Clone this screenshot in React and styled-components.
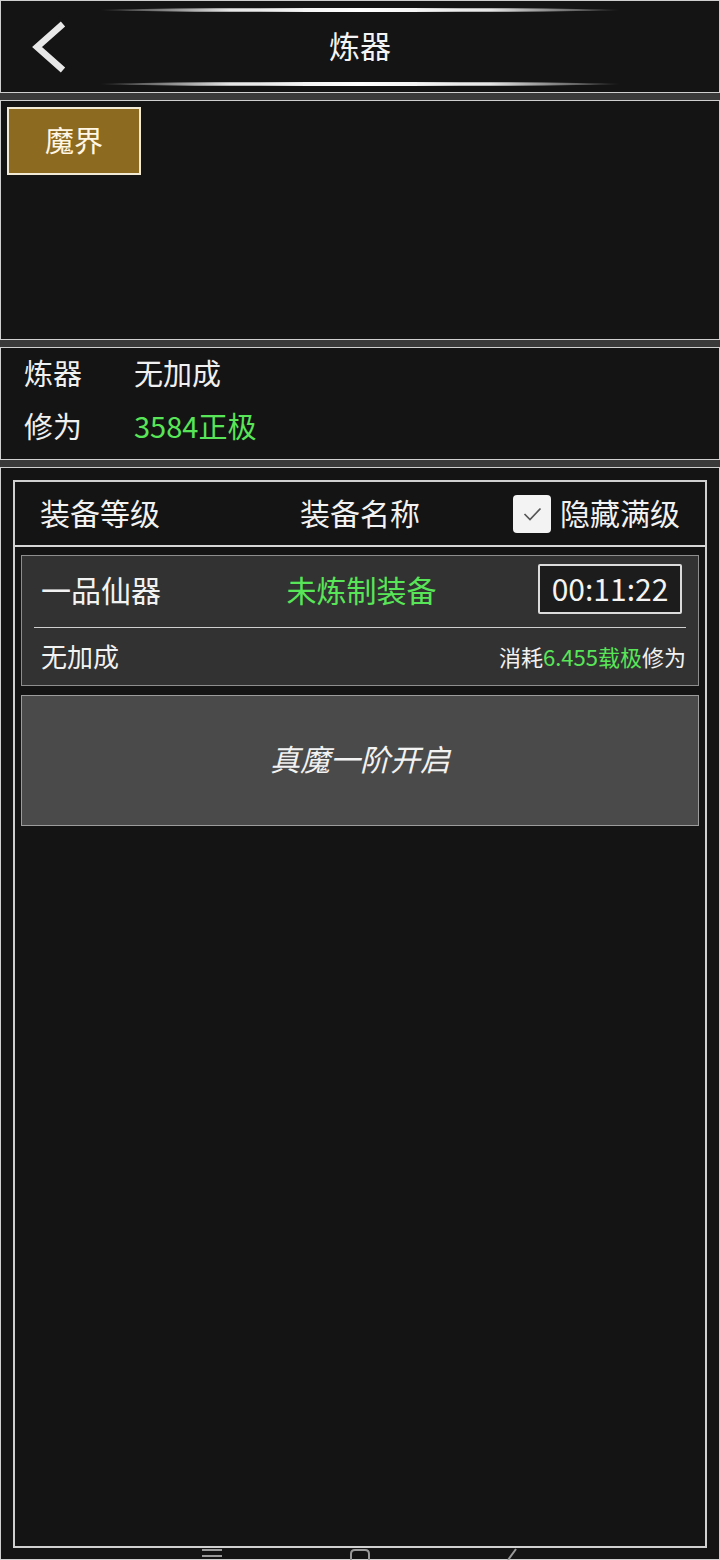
import React from "react";
import styled, { createGlobalStyle } from "styled-components";

const GlobalStyle = createGlobalStyle`
  * { box-sizing: border-box; }
  html, body {
    margin: 0;
    padding: 0;
    background: #3a3a3a;
  }
  body {
    font-family: "Noto Sans CJK SC", "Noto Sans", sans-serif;
    color: #f2f2f2;
  }
`;

const Page = styled.div`
  position: relative;
  width: 720px;
  height: 1560px;
  display: flex;
  flex-direction: column;
  gap: 7px;
  overflow: hidden;
`;

const Panel = styled.section`
  height: ${(props) => props.$height};
  background: #141414;
  border: 1px solid #cfcfcf;
  flex-shrink: 0;
`;

/* header */
const Header = styled(Panel)`
  display: grid;
  grid-template-columns: 99px 1fr 99px;
`;

const BackBtn = styled.div`
  display: flex;
  align-items: center;
  padding-left: 29px;
  cursor: pointer;
`;

const TitleCol = styled.div`
  display: flex;
  flex-direction: column;
  justify-content: space-between;
  align-items: stretch;
  padding: 7px 0 6px;
`;

const GlowLine = styled.div`
  height: 4px;
  border-radius: 50%;
  background: linear-gradient(
    90deg,
    rgba(255, 255, 255, 0) 0%,
    rgba(150, 150, 150, 0.6) 8%,
    #e6e6e6 25%,
    #ffffff 50%,
    #e6e6e6 75%,
    rgba(150, 150, 150, 0.6) 92%,
    rgba(255, 255, 255, 0) 100%
  );
`;

const Title = styled.h1`
  margin: 0;
  padding-bottom: 6px;
  text-align: center;
  font-size: 31px;
  font-weight: 400;
  line-height: 1;
  color: #f4f4f4;
`;

/* tabs */
const TabPanel = styled(Panel)`
  padding: 6px;
  display: flex;
  align-items: flex-start;
  gap: 8px;
`;

const Tab = styled.button`
  width: 134px;
  height: 68px;
  border: 2px solid #f3ead6;
  background: ${(props) => (props.$active ? "#8c6a20" : "#2a2a2a")};
  color: #fff6e4;
  font-family: inherit;
  font-size: 29px;
  line-height: 1;
  padding: 0 0 4px;
  cursor: pointer;
`;

/* stats */
const StatsPanel = styled(Panel)`
  padding: 0 0 5px;
`;

const StatRow = styled.div`
  height: 53px;
  display: flex;
  align-items: center;
  padding-bottom: 6px;
  font-size: 29px;
`;

const StatLabel = styled.span`
  flex: 0 0 133px;
  padding-left: 23px;
  color: #f0f0f0;
`;

const StatValue = styled.span`
  color: ${(props) => (props.$green ? "#58e658" : "#f0f0f0")};
`;

/* main list */
const MainPanel = styled(Panel)`
  flex: 1;
  padding: 12px 12px 11px;
  display: flex;
`;

const ListBox = styled.div`
  flex: 1;
  border: 2px solid #d0d0d0;
  display: flex;
  flex-direction: column;
`;

const ListHead = styled.div`
  height: 65px;
  border-bottom: 2px solid #d6d6d6;
  display: grid;
  grid-template-columns: 1fr auto 1fr;
  align-items: center;
  padding: 0 25px 4px;
  font-size: 30px;
`;

const HeadCell = styled.div`
  display: flex;
  align-items: center;
  justify-content: ${(props) => props.$justify || "flex-start"};
`;

const CheckBox = styled.div`
  width: 38px;
  height: 38px;
  border-radius: 4px;
  background: #f3f3f3;
  display: flex;
  align-items: center;
  justify-content: center;
  margin: 4px 9px 0 0;
`;

const ListBody = styled.div`
  padding: 8px 6px 0;
  display: flex;
  flex-direction: column;
  gap: 9px;
`;

const Card = styled.div`
  background: #323232;
  border: 1px solid #8e8e8e;
  padding: 0 12px;
`;

const CardTop = styled.div`
  height: 71px;
  display: grid;
  grid-template-columns: 1fr auto 1fr;
  align-items: center;
  padding: 0 4px 5px 7px;
  font-size: 30px;
`;

const Green = styled.span`
  color: #58e658;
`;

const Timer = styled.div`
  justify-self: end;
  width: 144px;
  height: 50px;
  border: 2px solid #dcdcdc;
  border-radius: 2px;
  background: #1c1c1c;
  display: flex;
  align-items: center;
  justify-content: center;
  padding-bottom: 3px;
  font-size: 30px;
  color: #f4f4f4;
`;

const Divider = styled.div`
  height: 1px;
  background: #cfcfcf;
`;

const CardBottom = styled.div`
  height: 57px;
  display: flex;
  align-items: center;
  justify-content: space-between;
  padding: 0 0 2px 7px;
  font-size: 26px;
`;

const Cost = styled.span`
  font-size: 22px;
`;

const OpenButton = styled.button`
  height: 131px;
  background: #4a4a4a;
  border: 1px solid #9c9c9c;
  color: #f2f2f2;
  font-family: inherit;
  font-size: 30px;
  font-style: italic;
  padding: 0 0 6px;
  cursor: pointer;
`;

/* android nav hint, clipped at the bottom edge */
const NavHint = styled.div`
  position: absolute;
  left: 0;
  right: 0;
  bottom: 0;
  height: 12px;
  pointer-events: none;
`;

const NavIcon = styled.svg`
  position: absolute;
  top: 0;
  left: ${(props) => props.$x}px;
`;

const ChevronLeft = () => (
  <svg width="38" height="52" viewBox="0 0 38 52">
    <path
      d="M33 3 L7 26 L33 49"
      fill="none"
      stroke="#e8e8e8"
      strokeWidth="6.5"
      strokeLinejoin="miter"
    />
  </svg>
);

const CheckMark = () => (
  <svg width="19" height="14" viewBox="0 0 19 14">
    <path d="M1.5 7 L7 12.5 L17.5 1.5" fill="none" stroke="#555" strokeWidth="1.7" />
  </svg>
);

export default function App() {
  return (
    <>
      <GlobalStyle />
      <Page>
        <Header $height="93px">
          <BackBtn>
            <ChevronLeft />
          </BackBtn>
          <TitleCol>
            <GlowLine />
            <Title>炼器</Title>
            <GlowLine />
          </TitleCol>
          <div />
        </Header>

        <TabPanel $height="240px">
          <Tab $active>魔界</Tab>
        </TabPanel>

        <StatsPanel $height="113px">
          <StatRow>
            <StatLabel>炼器</StatLabel>
            <StatValue>无加成</StatValue>
          </StatRow>
          <StatRow>
            <StatLabel>修为</StatLabel>
            <StatValue $green>3584正极</StatValue>
          </StatRow>
        </StatsPanel>

        <MainPanel>
          <ListBox>
            <ListHead>
              <HeadCell>装备等级</HeadCell>
              <HeadCell $justify="center">装备名称</HeadCell>
              <HeadCell $justify="flex-end">
                <CheckBox>
                  <CheckMark />
                </CheckBox>
                隐藏满级
              </HeadCell>
            </ListHead>
            <ListBody>
              <Card>
                <CardTop>
                  <span>一品仙器</span>
                  <Green>未炼制装备</Green>
                  <Timer>00:11:22</Timer>
                </CardTop>
                <Divider />
                <CardBottom>
                  <span>无加成</span>
                  <Cost>
                    消耗<Green>6.455载极</Green>修为
                  </Cost>
                </CardBottom>
              </Card>
              <OpenButton>真魔一阶开启</OpenButton>
            </ListBody>
          </ListBox>
        </MainPanel>

        <NavHint>
          <NavIcon $x={200} width="24" height="12" viewBox="0 0 24 12">
            <path d="M2 2 H22 M2 8 H22" stroke="#9a9a9a" strokeWidth="2" />
          </NavIcon>
          <NavIcon $x={348} width="24" height="12" viewBox="0 0 24 12">
            <path d="M3 12 V6 Q3 2 7 2 H17 Q21 2 21 6 V12" fill="none" stroke="#9a9a9a" strokeWidth="2" />
          </NavIcon>
          <NavIcon $x={502} width="20" height="12" viewBox="0 0 20 12">
            <path d="M14 1 L6 12" stroke="#9a9a9a" strokeWidth="2" />
          </NavIcon>
        </NavHint>
      </Page>
    </>
  );
}
